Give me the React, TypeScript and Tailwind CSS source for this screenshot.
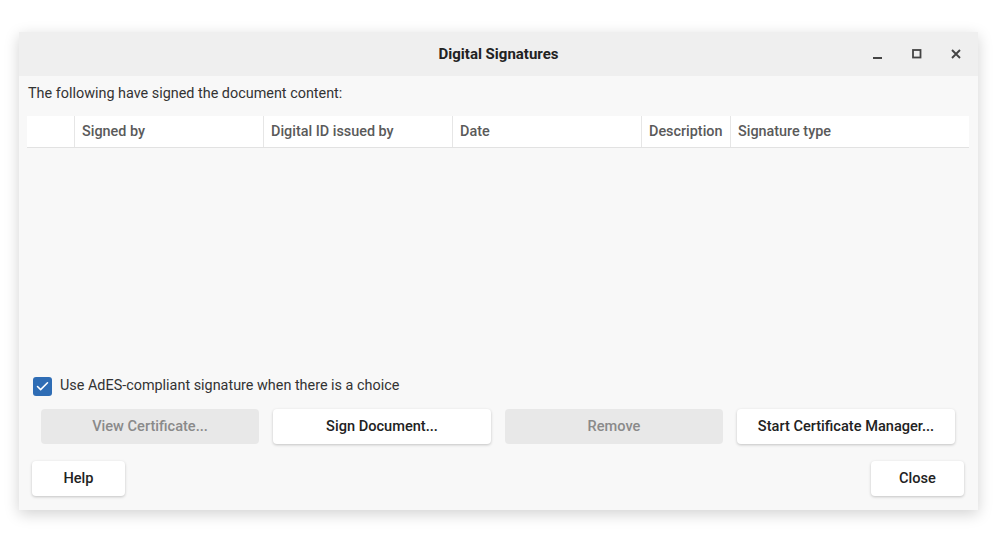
import { Check } from "lucide-react";

const columns = [
  { label: "", w: "w-[48px]" },
  { label: "Signed by", w: "w-[189px]" },
  { label: "Digital ID issued by", w: "w-[189px]" },
  { label: "Date", w: "w-[189px]" },
  { label: "Description", w: "w-[89px]" },
  { label: "Signature type", w: "flex-1" },
];

function Btn({ label, disabled, className = "" }: { label: string; disabled?: boolean; className?: string }) {
  return (
    <button
      className={
        "h-[35px] rounded-[4px] text-[14.6px] font-medium " +
        (disabled
          ? "bg-[#e8e8e8] text-[#8a8a8a]"
          : "bg-white text-[#222] shadow-[0_1px_3px_rgba(0,0,0,0.22)]") +
        " " +
        className
      }
    >
      {label}
    </button>
  );
}

export default function App() {
  return (
    <div className="min-h-[534px] bg-white pl-[19px] pt-[32px] font-['Roboto','Liberation_Sans',sans-serif]">
      <div className="flex h-[478px] w-[959px] flex-col bg-[#f8f8f8] shadow-[0_4px_14px_rgba(0,0,0,0.18)]">
        {/* Title bar */}
        <div className="relative flex h-[44px] items-center justify-center bg-[#efefef]">
          <span className="text-[15px] font-bold text-[#222]">Digital Signatures</span>
          <div className="absolute right-[16px] top-0 flex h-full items-center gap-[27px] text-[#444]">
            <svg width="12" height="12" viewBox="0 0 12 12">
              <rect x="1" y="9" width="9" height="2" fill="currentColor" />
            </svg>
            <svg width="12" height="12" viewBox="0 0 12 12">
              <rect x="2" y="2" width="7.5" height="7.5" fill="none" stroke="currentColor" strokeWidth="1.8" />
            </svg>
            <svg width="12" height="12" viewBox="0 0 12 12">
              <path d="M2 2L10 10M10 2L2 10" stroke="currentColor" strokeWidth="1.9" />
            </svg>
          </div>
        </div>

        {/* Body */}
        <div className="flex flex-1 flex-col px-[8px] pb-[14px]">
          <p className="mt-[9px] pl-[1px] text-[14.4px] leading-[18px] text-[#333]">
            The following have signed the document content:
          </p>
          <div className="mr-[1px] mt-[13px] flex h-[32px] border-b border-[#e2e2e2] bg-white">
            {columns.map((c, i) => (
              <div
                key={i}
                className={
                  c.w +
                  " flex items-center px-[7px] text-[14.4px] font-medium text-[#5a5a5a] " +
                  (i < columns.length - 1 ? "border-r border-[#e6e6e6]" : "")
                }
              >
                {c.label}
              </div>
            ))}
          </div>

          <div className="flex-1" />

          <label className="ml-[6px] flex items-center gap-[8px] text-[14.4px] text-[#333]">
            <span className="flex h-[19px] w-[19px] items-center justify-center rounded-[3px] bg-[#2f6db5]">
              <Check size={15} strokeWidth={2.5} className="text-white" />
            </span>
            Use AdES-compliant signature when there is a choice
          </label>

          <div className="ml-[14px] mt-[12px] flex gap-[14px]">
            <Btn label="View Certificate..." disabled className="w-[218px]" />
            <Btn label="Sign Document..." className="w-[218px]" />
            <Btn label="Remove" disabled className="w-[218px]" />
            <Btn label="Start Certificate Manager..." className="w-[218px]" />
          </div>

          <div className="ml-[5px] mr-[6px] mt-[17px] flex justify-between">
            <Btn label="Help" className="w-[93px]" />
            <Btn label="Close" className="w-[93px]" />
          </div>
        </div>
      </div>
    </div>
  );
}
